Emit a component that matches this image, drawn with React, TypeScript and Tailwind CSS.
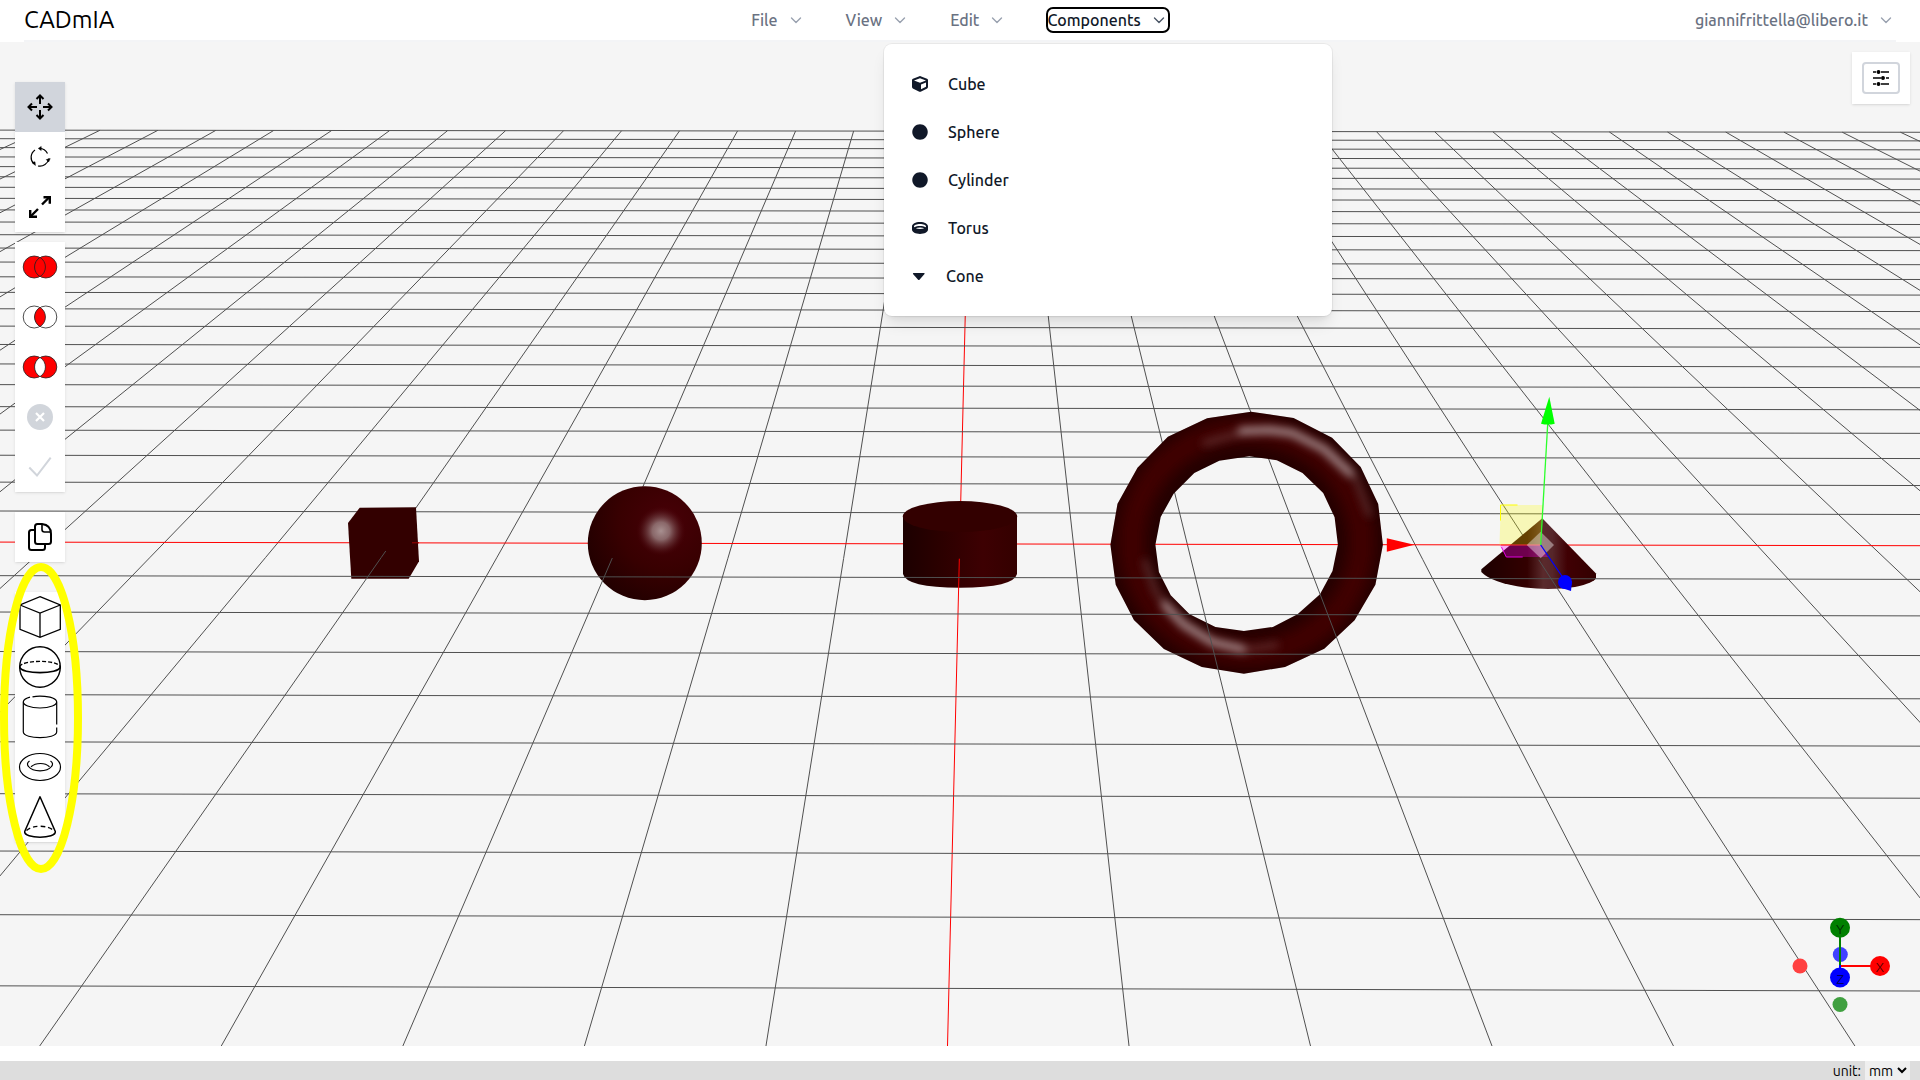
import React from "react";
import { FaCube, FaCircle, FaRing } from "react-icons/fa";

type Pt = [number, number];

/* Perspective of the ground plane: i runs along the x axis, k towards the viewer. */
function project(i: number, k: number): Pt {
  const w = -0.00021 * i - 0.03836 * k + 1;
  return [(113.56 * i - 37.6 * k + 959.7) / w, (0.1 * i + 11.475 * k + 543.9) / w];
}

const RANGE = Array.from({ length: 51 }, (_, n) => n - 25);
const NEAR = 12;
const SPLIT = 0.45;

function GridLine({ from, to, red }: { from: Pt; to: Pt; red?: boolean }) {
  const [x1, y1] = project(from[0], from[1]);
  const [x2, y2] = project(to[0], to[1]);
  return <line x1={x1} y1={y1} x2={x2} y2={y2} stroke={red ? "#ff0000" : "#505050"} strokeWidth={1} />;
}

function GridBack() {
  return (
    <g>
      {RANGE.map((i) => (
        <GridLine key={`i${i}`} from={[i, -25]} to={[i, SPLIT]} red={i === 0} />
      ))}
      {RANGE.filter((k) => k <= 0).map((k) => (
        <GridLine key={`k${k}`} from={[-25, k]} to={[25, k]} red={k === 0} />
      ))}
    </g>
  );
}

function GridFront() {
  return (
    <g>
      {RANGE.map((i) => (
        <GridLine key={`i${i}`} from={[i, SPLIT]} to={[i, NEAR]} red={i === 0} />
      ))}
      {RANGE.filter((k) => k > 0 && k < NEAR).map((k) => (
        <GridLine key={`k${k}`} from={[-25, k]} to={[25, k]} />
      ))}
      <GridLine from={[-5, 0.25]} to={[-5, SPLIT]} />
      <line x1="412" y1="542.8" x2="419" y2="542.8" stroke="#a00000" />
    </g>
  );
}

const TORUS =
  "M1251.1 411.7L1293.6 418L1332.1 437.7L1360.7 467L1378.2 504L1382.9 544.7L1375.4 584.7L1354.6 620.3L1324.3 648.7L1285 667L1243.9 673.7L1201.8 667L1163.9 649L1133.9 620L1115.7 584.7L1110.4 544.7L1117.5 503.7L1137.5 467.7L1167.9 436.7L1207.1 418.3Z" +
  "M1249.3 456.3L1276.8 460.3L1302.5 473L1323.2 493L1334.6 517.3L1337.9 544.7L1332.5 571L1320 594.3L1297.5 614.3L1272.9 627L1243.9 631L1215.4 627L1189.6 614.3L1170.7 595.3L1158.9 572L1155.4 544.7L1160.7 517L1173.6 493.7L1194.3 473L1219.3 460.7Z";

function Solids() {
  return (
    <g>
      <defs>
        <radialGradient id="ball" gradientUnits="userSpaceOnUse" cx="668" cy="522" r="98">
          <stop offset="0" stopColor="#480007" />
          <stop offset="0.5" stopColor="#380001" />
          <stop offset="1" stopColor="#1c0000" />
        </radialGradient>
        <radialGradient id="shine" gradientUnits="userSpaceOnUse" cx="661" cy="531" r="25">
          <stop offset="0" stopColor="#a89090" />
          <stop offset="0.35" stopColor="#967a7b" stopOpacity="0.85" />
          <stop offset="0.7" stopColor="#6d3f42" stopOpacity="0.4" />
          <stop offset="1" stopColor="#480007" stopOpacity="0" />
        </radialGradient>
        <linearGradient id="barrel" x1="0" x2="1" y1="0" y2="0">
          <stop offset="0" stopColor="#1c0000" />
          <stop offset="0.3" stopColor="#2a0000" />
          <stop offset="0.7" stopColor="#3d0002" />
          <stop offset="1" stopColor="#340000" />
        </linearGradient>
        <linearGradient id="hat" x1="0" x2="1" y1="0" y2="0">
          <stop offset="0" stopColor="#1c0000" />
          <stop offset="0.4" stopColor="#330000" />
          <stop offset="0.54" stopColor="#5a2a2c" />
          <stop offset="0.62" stopColor="#56262a" />
          <stop offset="0.75" stopColor="#400003" />
          <stop offset="1" stopColor="#330000" />
        </linearGradient>
        <clipPath id="torusClip">
          <path d={TORUS} clipRule="evenodd" />
        </clipPath>
        <filter id="softWide" x="-20%" y="-20%" width="140%" height="140%">
          <feGaussianBlur stdDeviation="7" />
        </filter>
        <filter id="softNarrow" x="-20%" y="-20%" width="140%" height="140%">
          <feGaussianBlur stdDeviation="4" />
        </filter>
      </defs>

      <path d="M359.7 507.7L416 507.3L419 561.3L408.7 578.7H351.3L348 523Z" fill="#330000" />

      <circle cx="644.8" cy="543.2" r="57" fill="url(#ball)" />
      <circle cx="661" cy="531" r="25" fill="url(#shine)" />

      <path d="M903 516.5V574Q906 587.5 960 587.7Q1014 587.5 1017 574V516.5Z" fill="url(#barrel)" />
      <ellipse cx="960" cy="516.5" rx="57.2" ry="15.4" fill="#330000" />

      <path d={TORUS} fillRule="evenodd" fill="#240000" />
      <g clipPath="url(#torusClip)" fill="none">
        <ellipse cx="1246.5" cy="542" rx="115" ry="111" stroke="#400003" strokeWidth="26" filter="url(#softWide)" />
        <g filter="url(#softNarrow)" strokeLinecap="round" strokeLinejoin="round">
          <path d="M1205 443L1251 430L1292 433L1324 449L1355 477L1369 514" stroke="#7a5254" strokeWidth="6" opacity="0.5" />
          <path d="M1242 431L1270 430L1292 433L1324 449L1350 473" stroke="#a08586" strokeWidth="8" />
          <path d="M1145 562L1156 593L1183 623L1212 641L1244 650L1276 645" stroke="#7a5254" strokeWidth="6" opacity="0.5" />
          <path d="M1165 605L1183 624L1212 642L1242 649" stroke="#a08586" strokeWidth="8" />
        </g>
      </g>

      <path
        d="M1542.3 518.3L1481.3 569.3V572Q1492 583 1525 587.5Q1550 590.5 1575 587Q1594 583 1596 578V573.5Z"
        fill="url(#hat)"
      />
    </g>
  );
}

function TransformGizmo() {
  return (
    <g>
      <path d="M1386.8 538.3L1414.3 544.7L1386.8 551.7Z" fill="#ff0000" />
      <path d="M1500.7 505H1542.7L1540.7 545H1499.5Z" fill="#ffff00" fillOpacity="0.25" />
      <path d="M1517.5 505H1500.5V520.5" fill="none" stroke="#ffff00" />
      <path d="M1499.5 545H1540.7L1548.3 557H1506.3Z" fill="#ff00ff" fillOpacity="0.3" />
      <path d="M1501.5 547L1506.3 557H1522.7" fill="none" stroke="#e000e0" />
      <path d="M1501 545H1540" stroke="#ff3030" />
      <path d="M1540.7 531.7L1554 545L1540.7 558.3L1526.7 545Z" fill="#ffffff" fillOpacity="0.4" />
      <path d="M1547.7 424L1540.7 545" stroke="#2bff2b" strokeWidth="1.3" />
      <path d="M1549.3 396.7L1554.7 423.7Q1548 425.5 1541 423.7Z" fill="#00ff00" />
      <path d="M1540.7 545L1562.5 577" stroke="#0000ff" strokeWidth="1.3" />
      <circle cx="1565" cy="582" r="7" fill="#0000ff" />
      <path d="M1560 587.5L1571 591L1572 581Z" fill="#0000ff" />
    </g>
  );
}

function AxisGizmo() {
  return (
    <g fontFamily="'Liberation Sans', sans-serif" fontSize="13" textAnchor="middle">
      <circle cx="1840.3" cy="954.5" r="7.5" fill="#4040ff" />
      <circle cx="1800" cy="966" r="7.5" fill="#ff4040" />
      <circle cx="1840" cy="1004.5" r="7.5" fill="#40a040" />
      <path d="M1840 966V932" stroke="#008000" strokeWidth="2" />
      <path d="M1840 966H1875" stroke="#ff0000" strokeWidth="2" />
      <circle cx="1840" cy="927.7" r="10" fill="#008000" />
      <circle cx="1880" cy="966" r="10" fill="#ff0000" />
      <path d="M1840 965V972" stroke="#0000ff" strokeWidth="2" />
      <circle cx="1840" cy="977.5" r="10" fill="#0000ff" />
      <text x="1840" y="933.5" fill="#003200">Y</text>
      <text x="1880" y="972" fill="#640000">X</text>
      <text x="1840" y="983.5" fill="#000064">Z</text>
    </g>
  );
}

function Scene() {
  return (
    <svg
      className="absolute inset-0 h-full w-full"
      viewBox="0 42 1920 1004"
      preserveAspectRatio="xMidYMid slice"
      role="img"
      aria-label="3D scene"
    >
      <GridBack />
      <Solids />
      <GridFront />
      <TransformGizmo />
      <AxisGizmo />
    </svg>
  );
}

function Chevron({ className }: { className: string }) {
  return (
    <svg
      className={`ml-2 h-5 w-5 ${className}`}
      viewBox="0 0 20 20"
      fill="none"
      stroke="currentColor"
      strokeWidth="1.4"
      strokeLinecap="round"
      strokeLinejoin="round"
      aria-hidden="true"
    >
      <path d="M5.5 8L10 12.5L14.5 8" />
    </svg>
  );
}

function MenuButton({ label }: { label: string }) {
  return (
    <button type="button" className="flex h-6 items-center font-medium text-gray-500">
      {label}
      <Chevron className="text-gray-400" />
    </button>
  );
}

const ConeIcon = () => (
  <svg width="14" height="16" viewBox="0 0 14 16" fill="currentColor" aria-hidden="true">
    <path d="M1.6 5h10.4q1 .2.5 1L7.5 11.8q-.7.6-1.4 0L1 6q-.4-.8.6-1z" />
  </svg>
);

const components = [
  { name: "Cube", icon: <FaCube /> },
  { name: "Sphere", icon: <FaCircle /> },
  { name: "Cylinder", icon: <FaCircle /> },
  { name: "Torus", icon: <FaRing /> },
  { name: "Cone", icon: <ConeIcon /> },
];

function ComponentsMenu() {
  return (
    <div className="relative">
      <button
        type="button"
        aria-expanded="true"
        className="flex h-6 items-center rounded-md font-medium text-gray-900 outline-2 -outline-offset-1 outline-black"
      >
        Components
        <Chevron className="text-gray-600" />
      </button>
      <div className="absolute top-full left-1/2 mt-3 grid w-md -translate-x-1/2 gap-6 rounded-lg bg-white p-7 shadow-lg ring-1 ring-black/5">
        {components.map((c) => (
          <button key={c.name} type="button" className="flex h-6 items-center gap-5 font-medium text-gray-900">
            {c.icon}
            {c.name}
          </button>
        ))}
      </div>
    </div>
  );
}

function Tool({ label, active, children }: { label: string; active?: boolean; children: React.ReactNode }) {
  return (
    <button type="button" aria-label={label} className={active ? "block bg-gray-300" : "block bg-white"}>
      <svg width="50" height="50" viewBox="0 0 50 50" fill="none" stroke="#000000" aria-hidden="true">
        {children}
      </svg>
    </button>
  );
}

function ToolGroup({ children }: { children: React.ReactNode }) {
  return <div className="flex flex-col bg-white shadow">{children}</div>;
}

const LENS = "M25 15.4A11.2 11.2 0 0 1 25 34.6A11.2 11.2 0 0 1 25 15.4Z";

function Venn({ outer, inner }: { outer: string; inner: string }) {
  return (
    <g stroke="#222222" strokeWidth="0.8">
      <circle cx="19.2" cy="25" r="11" fill={outer} />
      <circle cx="30.8" cy="25" r="11" fill={outer} />
      <path d={LENS} fill={inner} />
    </g>
  );
}

function Toolbar() {
  return (
    <div className="relative flex w-[50px] flex-col">
      <ToolGroup>
        <Tool label="Move" active>
          <g strokeWidth="2">
            <path d="M25 22V14M25 28V36M22 25H14M28 25H36" />
            <path d="M21.5 17L25 13.5L28.5 17M21.5 33L25 36.5L28.5 33M17 21.5L13.5 25L17 28.5M33 21.5L36.5 25L33 28.5" />
          </g>
        </Tool>
        <Tool label="Rotate">
          <g strokeWidth="1.2">
            <path d="M24.5 16.5A9 9 0 0 1 32.5 21.5M33.8 26.5A9 9 0 0 1 23 34M18.8 31.8A9 9 0 0 1 20 18" />
            <path
              d="M26.2 14.5V18.5L23.3 16.4ZM35.2 26.6L31.3 27.6L33.6 30ZM17 30.6L20 29.8L20.4 33.4Z"
              fill="#000000"
              strokeWidth="0.5"
            />
          </g>
        </Tool>
        <Tool label="Scale">
          <g strokeWidth="2.4">
            <path d="M27 22.5L34.5 15M23 27L15.5 34.5" />
            <path d="M28.5 15.2H34.8V21.8M15.2 28V34.8H22" />
          </g>
        </Tool>
      </ToolGroup>
      <div className="mt-2.5">
        <ToolGroup>
          <Tool label="Union">
            <Venn outer="#ff0000" inner="#ff0000" />
          </Tool>
          <Tool label="Intersection">
            <Venn outer="#ffffff" inner="#ff0000" />
          </Tool>
          <Tool label="Subtraction">
            <Venn outer="#ff0000" inner="#ffffff" />
          </Tool>
          <Tool label="Cancel">
            <circle cx="25" cy="25" r="13" fill="#d1d5db" stroke="none" />
            <path d="M21 21L29 29M29 21L21 29" stroke="#ffffff" strokeWidth="2.2" />
          </Tool>
          <Tool label="Confirm">
            <path d="M14.3 25.5L22 33.5L35.7 15.7" stroke="#d1d5db" strokeWidth="2" />
          </Tool>
        </ToolGroup>
      </div>
      <div className="mt-5">
        <ToolGroup>
          <Tool label="Duplicate">
            <g strokeWidth="2" strokeLinejoin="round">
              <path d="M22.5 12H27Q36 13 36 22V29.5Q36 32 33.5 32H22.5Q20 32 20 29.5V14.5Q20 12 22.5 12Z" />
              <path d="M27 12.5V17.5Q27 20 29.5 20H35.5" strokeWidth="1.6" />
              <path d="M20 18H16.5Q14 18 14 20.5V35.5Q14 38 16.5 38H27.5Q30 38 30 35.5V32.5" />
            </g>
          </Tool>
        </ToolGroup>
      </div>
      <div className="mt-[30px]">
        <ToolGroup>
          <Tool label="Add cube">
            <path d="M25 4.7L45.3 13V37.3L25 45.3L5 37.3V13ZM5 13L25 21L45.3 13M25 21V45" strokeWidth="1.3" />
          </Tool>
          <Tool label="Add sphere">
            <circle cx="25" cy="25" r="20.3" strokeWidth="1.4" />
            <path d="M4.7 25C6 32.5 44 32.5 45.3 25" strokeWidth="1.6" />
            <path d="M4.7 25C6 17.5 44 17.5 45.3 25" strokeWidth="1.4" strokeDasharray="4 2" />
          </Tool>
          <Tool label="Add cylinder">
            <path d="M15 5.2A16.7 6 0 1 0 35 5.2Q25 3.2 17.5 4.9" strokeWidth="1.2" />
            <path d="M8.3 10.5V40C8.8 47.6 41.2 47.6 41.7 40V35.5M41.7 32.5V10.5" strokeWidth="1.2" />
          </Tool>
          <Tool label="Add torus">
            <ellipse cx="25" cy="25" rx="20.5" ry="13.5" strokeWidth="1.2" />
            <path
              d="M14.5 19Q11 21.5 13.5 24.5C18 30.2 32 30.2 36.5 24.5Q39 21.5 35.5 19M16 24.8C21 20.4 30 20.4 34.5 24.8"
              strokeWidth="1.2"
            />
          </Tool>
          <Tool label="Add cone">
            <path d="M25 4.7L9.7 39.5C8.5 47 41.5 47 40.3 39.5Z" strokeWidth="1.5" strokeLinejoin="round" />
            <path d="M11.5 38.5Q16 34.3 25 34.3Q34 34.3 38.5 38.5" strokeWidth="1.4" strokeDasharray="4.5 3" />
          </Tool>
        </ToolGroup>
      </div>
      <svg
        className="pointer-events-none absolute -bottom-8 -left-[15px] overflow-visible"
        width="82"
        height="312"
        viewBox="0 0 82 312"
        fill="none"
        aria-hidden="true"
      >
        <ellipse cx="41" cy="156" rx="37" ry="151" stroke="#ffff00" strokeWidth="8" />
      </svg>
    </div>
  );
}

export default function App() {
  return (
    <div className="flex h-screen flex-col overflow-hidden bg-white font-['Ubuntu','Noto_Sans',sans-serif] text-base">
      <header className="relative z-10 px-6">
        <div className="flex h-[42px] items-center justify-between border-b-2 border-gray-100">
          <div className="flex-1 text-2xl leading-10 text-black">CADmIA</div>
          <nav className="flex items-center gap-10">
            <MenuButton label="File" />
            <MenuButton label="View" />
            <MenuButton label="Edit" />
            <ComponentsMenu />
          </nav>
          <div className="flex flex-1 justify-end">
            <MenuButton label="giannifrittella@libero.it" />
          </div>
        </div>
      </header>

      <main className="relative flex flex-1 items-start justify-between bg-[#f5f5f5]">
        <Scene />
        <div className="mt-10 ml-[15px]">
          <Toolbar />
        </div>
        <div className="relative mt-2.5 mr-2.5 bg-white p-2.5 shadow">
          <button
            type="button"
            aria-label="Settings"
            className="flex h-8 w-[38px] items-center justify-center rounded-sm border-2 border-gray-300"
          >
            <svg width="18" height="18" viewBox="0 0 18 18" stroke="#000000" strokeWidth="1.3" aria-hidden="true">
              <path d="M1 3H4M9 3H17M1 9H9M14 9H17M1 15H4M9 15H17" />
              <circle cx="6.5" cy="3" r="1.3" />
              <circle cx="11" cy="9" r="1.3" />
              <circle cx="6.5" cy="15" r="1.3" />
            </svg>
          </button>
        </div>
      </main>

      <footer className="mt-[15px] flex h-[19px] items-center justify-end gap-1 bg-[#dddddd] pr-2.5 text-sm text-black">
        <label htmlFor="unit">unit:</label>
        <select id="unit" className="h-[19px] bg-[#efefef] text-sm leading-none">
          <option>mm</option>
          <option>cm</option>
          <option>m</option>
        </select>
      </footer>
    </div>
  );
}
